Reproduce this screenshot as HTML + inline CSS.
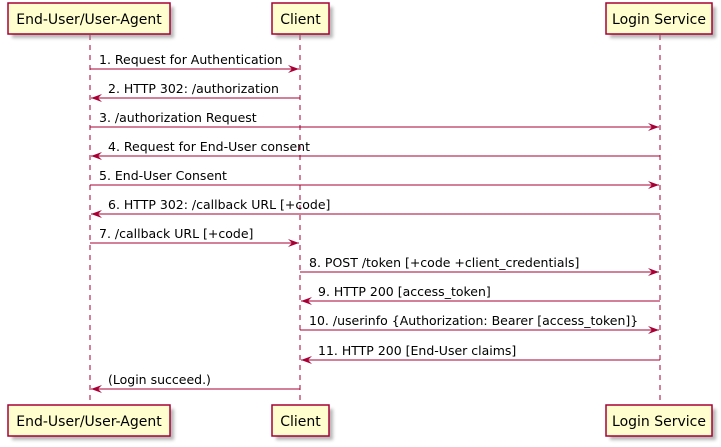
<!DOCTYPE html><html><head><style>body{margin:0;background:#fff}svg{display:block}</style></head><body>
<svg width="721" height="447" xmlns="http://www.w3.org/2000/svg" font-family="DejaVu Sans, Liberation Sans, sans-serif">
<defs><filter id="s" x="-10%" y="-20%" width="130%" height="160%"><feGaussianBlur stdDeviation="1.5"/></filter></defs>
<g stroke="#A80036" stroke-width="1" stroke-dasharray="5,5">
<line x1="90" y1="35" x2="90" y2="405"/><line x1="300" y1="35" x2="300" y2="405"/><line x1="660" y1="35" x2="660" y2="405"/></g>
<g fill="#888" opacity="0.6" filter="url(#s)">
<rect x="12" y="7" width="162" height="31"/><rect x="276" y="7" width="57" height="31"/><rect x="610" y="7" width="106" height="31"/>
<rect x="12" y="409" width="162" height="31"/><rect x="276" y="409" width="57" height="31"/><rect x="610" y="409" width="106" height="31"/></g>
<g fill="#FEFECE" stroke="#A80036" stroke-width="1.5">
<rect x="8" y="3" width="162" height="31"/><rect x="272" y="3" width="57" height="31"/><rect x="606" y="3" width="106" height="31"/>
<rect x="8" y="405" width="162" height="31"/><rect x="272" y="405" width="57" height="31"/><rect x="606" y="405" width="106" height="31"/></g>
<g font-size="14" fill="#000" text-anchor="middle">
<text x="89" y="24">End-User/User-Agent</text><text x="300.5" y="24">Client</text><text x="659" y="24">Login Service</text>
<text x="89" y="426">End-User/User-Agent</text><text x="300.5" y="426">Client</text><text x="659" y="426">Login Service</text></g>
<g stroke="#A80036" stroke-width="1" fill="#A80036" id="a"></g>
<g font-size="12.5" fill="#000">
<text x="99" y="64">1. Request for Authentication</text>
<text x="108" y="93">2. HTTP 302: /authorization</text>
<text x="99" y="122">3. /authorization Request</text>
<text x="108" y="151">4. Request for End-User consent</text>
<text x="99" y="180">5. End-User Consent</text>
<text x="108" y="209">6. HTTP 302: /callback URL [+code]</text>
<text x="99" y="238">7. /callback URL [+code]</text>
<text x="309" y="267">8. POST /token [+code +client_credentials]</text>
<text x="318" y="296">9. HTTP 200 [access_token]</text>
<text x="309" y="325">10. /userinfo {Authorization: Bearer [access_token]}</text>
<text x="318" y="355">11. HTTP 200 [End-User claims]</text>
<text x="108" y="384">(Login succeed.)</text>
</g>
<g stroke="#A80036" fill="none">
<line x1="90" y1="69" x2="299" y2="69"/><line x1="91" y1="98" x2="300" y2="98"/>
<line x1="90" y1="127" x2="659" y2="127"/><line x1="91" y1="156" x2="660" y2="156"/>
<line x1="90" y1="185" x2="659" y2="185"/><line x1="91" y1="214" x2="660" y2="214"/>
<line x1="90" y1="243" x2="299" y2="243"/><line x1="300" y1="272" x2="659" y2="272"/>
<line x1="301" y1="301" x2="660" y2="301"/><line x1="300" y1="330" x2="659" y2="330"/>
<line x1="301" y1="360" x2="660" y2="360"/><line x1="91" y1="389" x2="300" y2="389"/></g>
<g fill="#A80036">
<path d="M299,69 l-11,-4 4,4 -4,4z"/><path d="M91,98 l11,-4 -4,4 4,4z"/>
<path d="M659,127 l-11,-4 4,4 -4,4z"/><path d="M91,156 l11,-4 -4,4 4,4z"/>
<path d="M659,185 l-11,-4 4,4 -4,4z"/><path d="M91,214 l11,-4 -4,4 4,4z"/>
<path d="M299,243 l-11,-4 4,4 -4,4z"/><path d="M659,272 l-11,-4 4,4 -4,4z"/>
<path d="M301,301 l11,-4 -4,4 4,4z"/><path d="M659,330 l-11,-4 4,4 -4,4z"/>
<path d="M301,360 l11,-4 -4,4 4,4z"/><path d="M91,389 l11,-4 -4,4 4,4z"/></g>
</svg></body></html>
